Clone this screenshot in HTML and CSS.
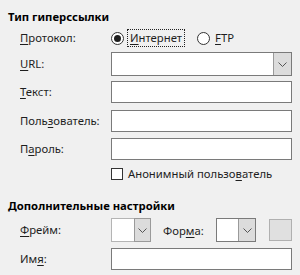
FILE: index.html
```html
<!DOCTYPE html>
<html lang="ru">
<head>
<meta charset="utf-8">
<link rel="stylesheet" href="styles.css">
</head>
<body>
<div class="dlg">
  <div class="h h1">Тип гиперссылки</div>
  <div class="form">
    <div class="lbl r-proto"><u>П</u>ротокол:</div>
    <div class="proto">
      <span class="radio on"></span>
      <span class="focus"><u>И</u>нтернет</span>
      <span class="radio ftp"></span>
      <span class="rlbl"><u>F</u>TP</span>
    </div>

    <div class="lbl r-url"><u>U</u>RL:</div>
    <div class="combo wide r-url"><span class="cin"></span><span class="cbtn"><svg width="9" height="5" viewBox="0 0 9 5"><path d="M0.5 0.5 L4.5 4.5 L8.5 0.5" fill="none" stroke="#555" stroke-width="1"/></svg></span></div>

    <div class="lbl r-txt"><u>Т</u>екст:</div>
    <div class="edit r-txt"></div>

    <div class="lbl r-user">Поль<u>з</u>ователь:</div>
    <div class="edit r-user"></div>

    <div class="lbl r-pass">П<u>а</u>роль:</div>
    <div class="edit r-pass"></div>

    <div class="r-chk"></div>
    <div class="chkrow r-chk"><span class="chk"></span><span>Анонимный пользо<u>в</u>атель</span></div>
  </div>

  <div class="h h2">Дополнительные настройки</div>
  <div class="form">
    <div class="lbl r-frame"><u>Ф</u>рейм:</div>
    <div class="framerow r-frame">
      <div class="combo small light"><span class="cin"></span><span class="cbtn"><svg width="9" height="5" viewBox="0 0 9 5"><path d="M0.5 0.5 L4.5 4.5 L8.5 0.5" fill="none" stroke="#555" stroke-width="1"/></svg></span></div>
      <span class="lbl2">Фор<u>м</u>а:</span>
      <div class="combo small"><span class="cin"></span><span class="cbtn"><svg width="9" height="5" viewBox="0 0 9 5"><path d="M0.5 0.5 L4.5 4.5 L8.5 0.5" fill="none" stroke="#555" stroke-width="1"/></svg></span></div>
      <span class="sq"></span>
    </div>

    <div class="lbl r-name">Им<u>я</u>:</div>
    <div class="edit r-name"></div>
  </div>
</div>
</body>
</html>
```

FILE: styles.css
```css
html, body {
  margin: 0;
  padding: 0;
  background: #f0f0f0;
}
body {
  font-family: "Noto Sans", "Open Sans", sans-serif;
  font-size: 11.3px;
  color: #1e1e1e;
  width: 300px;
  height: 275px;
  overflow: hidden;
}
u {
  text-decoration: underline;
  text-underline-offset: 2px;
}
.dlg {
  padding: 9px 8px 0 8px;
}
.h {
  font-weight: bold;
  color: #000;
  height: 16px;
  line-height: 16px;
}
.form {
  display: grid;
  grid-template-columns: 91px 181px;
  margin-left: 12px;
  align-items: center;
}
.lbl {
  line-height: 16px;
}
.proto {
  display: flex;
  align-items: center;
  height: 18px;
  margin-top: 4px;
}
.r-proto { margin-top: 4px; }
.radio {
  box-sizing: border-box;
  width: 13px;
  height: 13px;
  border: 1px solid #333;
  border-radius: 50%;
  background: #fff;
  position: relative;
  flex: none;
}
.radio.on::after {
  content: "";
  position: absolute;
  left: 2px;
  top: 2px;
  width: 7px;
  height: 7px;
  border-radius: 50%;
  background: #1e1e1e;
}
.focus {
  margin-left: 3px;
  padding: 0 2px 0 2px;
  height: 16px;
  line-height: 16px;
  border: 1px dotted #222;
}
.radio.ftp {
  margin-left: 12px;
}
.rlbl {
  margin-left: 5px;
  line-height: 16px;
}
.r-url { margin-top: 5px; }
.combo {
  box-sizing: border-box;
  display: flex;
  height: 24px;
  border: 1px solid #7a7a7a;
  background: #fff;
}
.combo .cin {
  flex: 1;
}
.combo .cbtn {
  box-sizing: border-box;
  width: 18px;
  background: #dcdcdc;
  border-left: 1px solid #9a9a9a;
  display: flex;
  align-items: center;
  justify-content: center;
}
.edit {
  box-sizing: border-box;
  height: 22px;
  border: 1px solid #7a7a7a;
  background: #fff;
}
.r-txt { margin-top: 5px; }
.r-user { margin-top: 7px; }
.r-pass { margin-top: 6px; }
.r-chk { margin-top: 7px; }
.chkrow {
  display: flex;
  align-items: center;
  height: 14px;
  line-height: 14px;
}
.chk {
  box-sizing: border-box;
  width: 12px;
  height: 12px;
  border: 1px solid #333;
  background: #fff;
  margin-right: 5px;
  flex: none;
}
.h2 {
  margin-top: 17px;
}
.r-frame { margin-top: 4px; }
.framerow {
  display: flex;
  align-items: center;
  height: 24px;
}
.combo.small {
  width: 40px;
}
.combo.small .cbtn {
  width: 17px;
}
.combo.light {
  border-color: #b4b4b4;
}
.combo.light .cbtn {
  border: 1px solid #9a9a9a;
  margin: -1px -1px -1px 0;
  height: 24px;
}
.lbl2 {
  margin-left: 12px;
  width: 53px;
}
.sq {
  box-sizing: border-box;
  width: 23px;
  height: 22px;
  margin-left: 13px;
  background: #e0e0e0;
  border: 1px solid #b0b0b0;
}
.r-name { margin-top: 6px; }
```
